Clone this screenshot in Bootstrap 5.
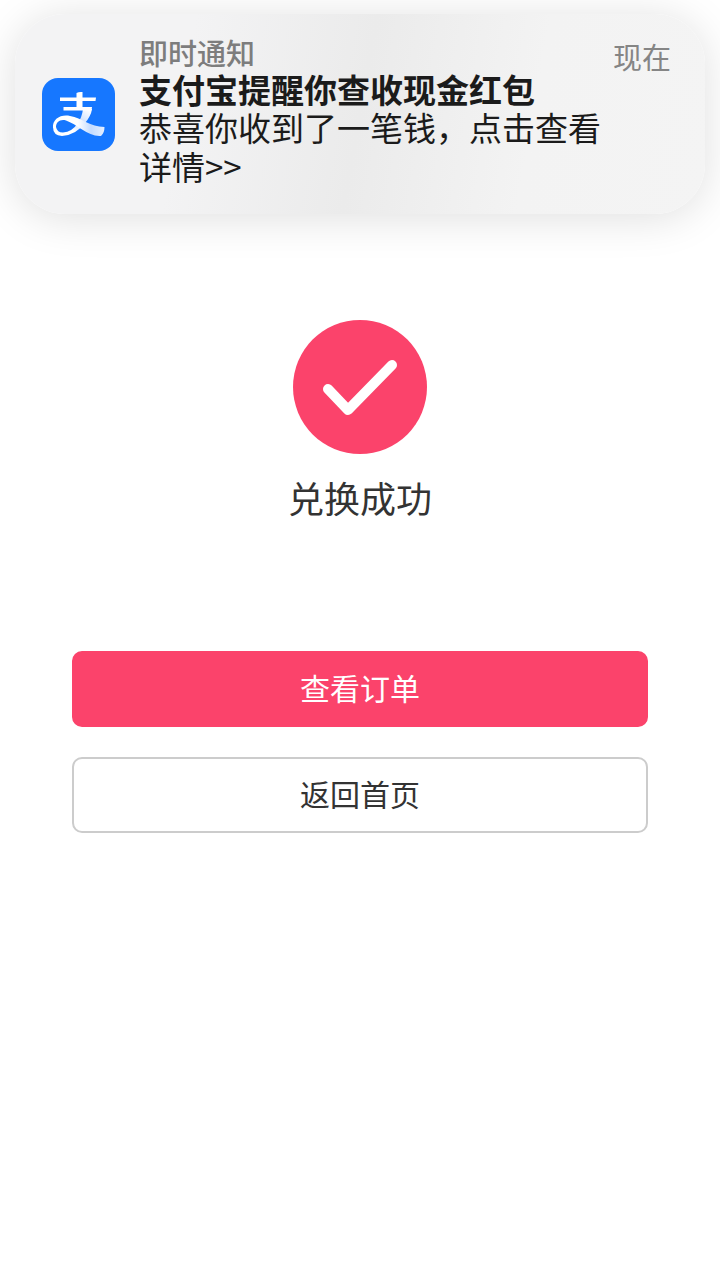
<!DOCTYPE html>
<html lang="zh-CN">
<head>
<meta charset="utf-8">
<meta name="viewport" content="width=device-width, initial-scale=1">
<title>兑换成功</title>
<link href="https://cdn.jsdelivr.net/npm/bootstrap@5.3.0/dist/css/bootstrap.min.css" rel="stylesheet">
<style>
  body { font-family: "Noto Sans CJK SC", sans-serif; color: #333; background: #fff; }
  .notice {
    margin: 14px 15px 0; padding: 20px 34px 28px 27px; border-radius: 50px; color: #1b1b1b;
    background: linear-gradient(100deg, #f3f3f4 0%, #f3f3f4 25%, #ebebeb 50%, #f3f3f3 74%, #f4f4f4 100%);
    box-shadow: 0 4px 44px rgba(0, 0, 0, .13);
  }
  .notice-icon { width: 73px; height: 73px; }
  .notice-app { font-size: 29px; line-height: 36px; font-weight: 500; color: #7d7d7d; }
  .notice-title { font-size: 33px; line-height: 38px; font-weight: 700; }
  .notice-text { font-size: 33px; line-height: 39px; }
  .notice-time { font-size: 29px; line-height: 44px; color: #858585; }
  .result { padding: 106px 10% 0; }
  .result-icon { width: 134px; height: 134px; }
  .result-title { font-size: 36px; line-height: 44px; font-weight: 400; margin: 21px 0 132px; }
  .result-actions { gap: 30px; }
  .result-btn { font-size: 30px; line-height: 40px; padding: 14px 16px 18px; border-width: 2px; border-radius: 10px; }
  .btn-order { --bs-btn-bg: #fb436b; --bs-btn-border-color: #fb436b; --bs-btn-color: #fff; --bs-btn-hover-bg: #e93a61; --bs-btn-hover-color: #fff; }
  .btn-home { --bs-btn-bg: #fff; --bs-btn-border-color: #ccc; --bs-btn-color: #333; --bs-btn-hover-bg: #f6f6f6; --bs-btn-hover-border-color: #ccc; }
</style>
</head>
<body>
<aside class="notice d-flex" aria-label="通知">
  <svg class="notice-icon flex-shrink-0 align-self-center mt-2 me-4" viewBox="0 0 73 73" role="img" aria-label="支付宝">
    <defs>
      <linearGradient id="tail" x1="36" y1="0" x2="62" y2="0" gradientUnits="userSpaceOnUse">
        <stop offset="0" stop-color="#fff"/><stop offset=".5" stop-color="#c3dbff"/><stop offset="1" stop-color="#e3eeff"/>
      </linearGradient>
      <linearGradient id="bend" x1="48" y1="32" x2="33" y2="54" gradientUnits="userSpaceOnUse">
        <stop offset="0" stop-color="#fff"/><stop offset=".6" stop-color="#c7ddff"/><stop offset="1" stop-color="#fff"/>
      </linearGradient>
    </defs>
    <rect width="73" height="73" rx="16" fill="#1677ff"/>
    <path d="M41 31 H50 Q49 38 43 45 Q34 57 20 58 Q11 57.500 11 49 L14 49 Q15 54.500 21 54.500 Q30 54 36 45 Q40 39 41 31 Z" fill="url(#bend)"/>
    <path d="M11 50 C10 41 19 36 28 38 C40 40 48 49 62.500 49 Q62.500 55 59 58 C46 59 35 46 24 42.500 C18 41 14 44 14 49.500 Z" fill="url(#tail)"/>
    <path d="M34.500 15 Q37 13.500 40.500 14 V19.500 H54 L53.500 23 H40.500 V29 H50 L49.500 32.500 H21.500 V29 H34.500 V23 H18 V19.500 H34.500 Z" fill="#fff"/>
  </svg>
  <div class="flex-grow-1">
    <div class="notice-app">即时通知</div>
    <div class="notice-title">支付宝提醒你查收现金红包</div>
    <div class="notice-text">恭喜你收到了一笔钱，点击查看详情&gt;&gt;</div>
  </div>
  <time class="notice-time flex-shrink-0">现在</time>
</aside>
<main class="result d-flex flex-column align-items-center">
  <svg class="result-icon" viewBox="0 0 134 134" aria-hidden="true">
    <circle cx="67" cy="67" r="67" fill="#fb436b"/>
    <path d="M35 69 L55 90 L99 45" fill="none" stroke="#fff" stroke-width="10" stroke-linecap="round" stroke-linejoin="round"/>
  </svg>
  <h1 class="result-title">兑换成功</h1>
  <div class="result-actions d-grid w-100">
    <button type="button" class="btn btn-order result-btn">查看订单</button>
    <button type="button" class="btn btn-home result-btn">返回首页</button>
  </div>
</main>
<script src="https://cdn.jsdelivr.net/npm/bootstrap@5.3.0/dist/js/bootstrap.bundle.min.js"></script>
</body>
</html>
